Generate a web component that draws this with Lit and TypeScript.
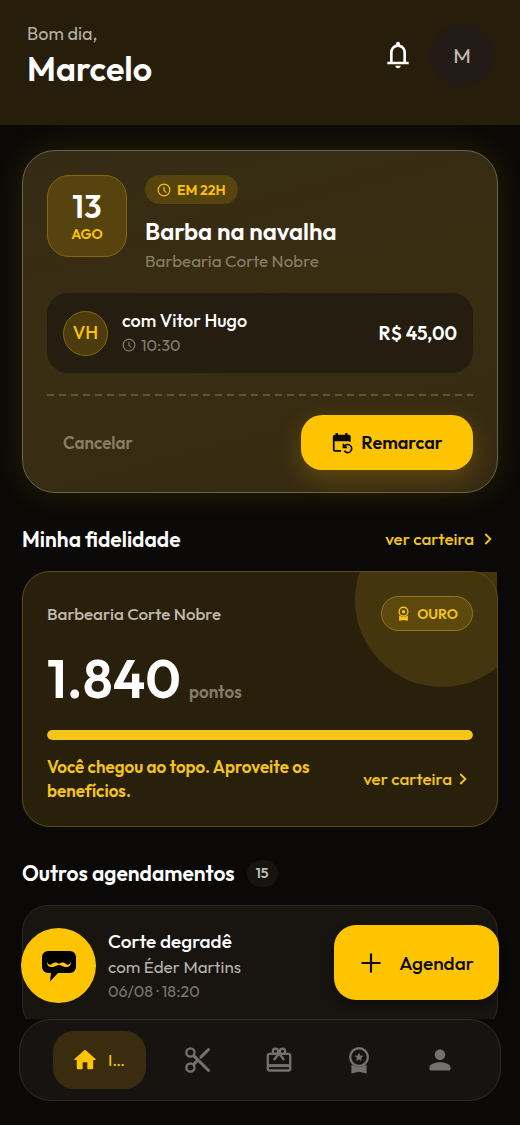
import { LitElement, html, css, svg } from "lit";
import { customElement, property } from "lit/decorators.js";

const ICONS: Record<string, unknown> = {
  bell: svg`<path fill="currentColor" d="M4 19v-2h2v-7q0-2.075 1.25-3.687T10.5 4.2v-.7q0-.625.438-1.062T12 2t1.063.438T13.5 3.5v.7q2 .5 3.25 2.113T18 10v7h2v2zm8 3q-.825 0-1.412-.587T10 20h4q0 .825-.587 1.413T12 22m-4-5h8v-7q0-1.65-1.175-2.825T12 6 9.175 7.175 8 10z"/>`,
  clock: svg`<g fill="none" stroke="currentColor" stroke-width="2"><circle cx="12" cy="12" r="10"/><path d="M12 6.500v6l4 4"/></g>`,
  reschedule: svg`<path fill="currentColor" d="M4 21.500q-2 0-2-2V5q0-2 2-2h1V1h2.500v2h8V1H18v2h1.500q2 0 2 2v5.500H19.700V10H4v9.700h7v1.800z"/><path fill="none" stroke="currentColor" stroke-width="1.800" d="M14.500 20.500a4.400 4.400 0 1 0-.3-4.300M13.600 12.800v4h4"/>`,
  chevron: svg`<path fill="none" stroke="currentColor" stroke-width="2.800" d="M8 4.500 15.500 12 8 19.500"/>`,
  medal: svg`<circle cx="12" cy="9" r="7" fill="none" stroke="currentColor" stroke-width="2.200"/><circle cx="12" cy="9" r="2.800" fill="currentColor"/><path fill="currentColor" d="M5 15q3 2.200 7 2.200t7-2.200v8.500l-7-1.200-7 1.200z"/>`,
  medalStar: svg`<circle cx="12" cy="9.500" r="7.600" fill="none" stroke="currentColor" stroke-width="2"/><path fill="currentColor" d="m12 5.700 1.100 2.500 2.700.25-2.050 1.800.6 2.650L12 11.500l-2.350 1.400.6-2.650L8.200 8.450l2.700-.25zM5.500 16Q8.600 17.800 12 17.800t6.500-1.800v7.500L12 22l-6.500 1.500z"/>`,
  home: svg`<path fill="currentColor" d="M10 19v-5h4v5c0 .55.45 1 1 1h3c.55 0 1-.45 1-1v-7h1.700c.46 0 .68-.57.33-.87L12.670 3.600c-.38-.34-.96-.34-1.340 0l-8.360 7.530c-.34.3-.13.87.33.87H5v7c0 .55.45 1 1 1h3c.55 0 1-.45 1-1z"/>`,
  scissors: svg`<g fill="none" stroke="currentColor" stroke-width="2" stroke-linecap="round"><circle cx="5.500" cy="5.500" r="3.500"/><circle cx="5.500" cy="18.500" r="3.500"/><path stroke-width="2.600" d="m8.500 8.500 12.500 12.500M8.500 15.500l2.500-2.500M14.500 9.500 21 3"/></g>`,
  gift: svg`<g fill="none" stroke="currentColor" stroke-width="2" stroke-linejoin="round"><rect x="2.400" y="6.800" width="19.200" height="14.200" rx="1.500"/><path stroke-width="2.600" d="M2.400 16.800h19.200"/><circle cx="9" cy="4.600" r="2.300"/><circle cx="15" cy="4.600" r="2.300"/><path d="m7.600 12 4.400-5.600 4.400 5.600"/></g>`,
  person: svg`<path fill="currentColor" d="M12 12c2.600 0 4.500-2 4.500-4.500S14.600 3 12 3 7.500 5 7.500 7.500 9.400 12 12 12zm0 2c-3.600 0-9 1.340-9 4.500V20c0 .55.45 1 1 1h16c.55 0 1-.45 1-1v-1.500c0-3.160-5.400-4.500-9-4.500z"/>`,
  plus: svg`<path fill="none" stroke="currentColor" stroke-width="2.200" d="M12 2.500v19M2.500 12h19"/>`,
  moustache: svg`<path fill="#000" d="M6 1h22a6 6 0 0 1 6 6v10a6 6 0 0 1-6 6H16l-8 8.500L9 23H6a6 6 0 0 1-6-6V7a6 6 0 0 1 6-6z"/><path fill="#ffc400" d="M17 14c-2-2-5-2-7 0-1.500 1.500-4 .8-5-2.200 0 4.700 3 5.700 6 5.200 2.500-.5 4-2 6-2s3.500 1.500 6 2c3 .5 6-.5 6-5.200-1 3-3.500 3.700-5 2.200-2-2-5-2-7 0z"/>`,
};

@customElement("ui-icon")
class UiIcon extends LitElement {
  @property() name = "";
  @property() box = "0 0 24 24";
  static styles = css`
    :host { display: block; flex: none; width: 24px; height: 24px; }
    svg { display: block; width: 100%; height: 100%; }
  `;
  render() {
    return html`<svg viewBox=${this.box} aria-hidden="true">${ICONS[this.name]}</svg>`;
  }
}

@customElement("app-root")
class AppRoot extends LitElement {
  static styles = css`
    :host {
      display: flex; flex-direction: column; height: 100vh; overflow: hidden;
      background: #0a0907; color: #fff;
      font-family: Outfit, Lato, sans-serif; font-size: 18px; line-height: 24px; font-weight: 500;
    }
    * { box-sizing: border-box; }
    button { font: inherit; color: inherit; border: 0; background: none; padding: 0; cursor: pointer; }
    a { color: inherit; text-decoration: none; }
    h1, h2, h3, p { margin: 0; font-weight: inherit; }

    .top { flex: none; display: flex; align-items: center; justify-content: space-between; height: 125px; padding: 0 26px 12px 27px; background: #261e0a; position: relative; z-index: 1; }
    .hello { font-weight: 400; color: #b5b0a5; }
    .name { font-size: 34px; line-height: 46px; font-weight: 600; }
    .actions { display: flex; align-items: center; gap: 16px; padding-bottom: 3px; }
    .bell ui-icon { width: 32px; height: 32px; }
    .me { width: 64px; height: 64px; border-radius: 50%; background: #231b15; color: #c0bbb5; font-size: 21px; font-weight: 400; }

    .stage { flex: 1; min-height: 0; position: relative; }
    .scroll { height: 100%; overflow: auto; scrollbar-width: none; padding: 25px 22px; }

    .next { border: 1px solid #6b644d; border-radius: 33px; padding: 24px 24px 22px; background: linear-gradient(165deg, #352b15, #392d12 45%, #362a12); box-shadow: 0 0 36px rgba(255, 196, 0, 0.13); }
    .head { display: flex; gap: 18px; }
    .date { flex: none; width: 80px; height: 82px; border: 1px solid #86690a; border-radius: 22px; background: #57430e; display: flex; flex-direction: column; align-items: center; justify-content: center; }
    .day { font-size: 32px; line-height: 36px; font-weight: 600; }
    .month { font-size: 14px; line-height: 20px; font-weight: 600; color: #ffc400; }
    .info { min-width: 0; display: flex; flex-direction: column; align-items: flex-start; }
    .soon { display: flex; align-items: center; gap: 6px; height: 29px; padding: 0 12px; border-radius: 15px; background: #57430e; color: #ffc400; font-size: 14px; font-weight: 600; }
    .soon ui-icon { width: 14px; height: 14px; }
    .service { margin-top: 11px; font-size: 24px; line-height: 32px; font-weight: 600; }
    .shop { margin-top: 2px; font-size: 17px; font-weight: 400; color: #887f69; }
    .pro { display: flex; align-items: center; gap: 14px; margin-top: 20px; padding: 16px; min-height: 80px; border-radius: 21px; background: #251d0f; }
    .initials { flex: none; width: 45px; height: 45px; border: 1px solid #86690a; border-radius: 50%; background: #4c3b0d; color: #ffc400; display: grid; place-items: center; }
    .who { flex: 1; }
    .hour { display: flex; align-items: center; gap: 5px; font-size: 16px; font-weight: 400; color: #837c70; }
    .hour ui-icon { width: 14px; height: 14px; }
    .price { font-size: 19px; font-weight: 600; }
    .rule { height: 2px; margin: 21px 0 19px; background: repeating-linear-gradient(90deg, #5f553d 0 7px, transparent 7px 12px); }
    .choices { display: flex; align-items: center; justify-content: space-between; padding-left: 16px; }
    .cancel { color: #887d67; font-size: 17px; font-weight: 600; }
    .redo { display: flex; align-items: center; justify-content: center; gap: 8px; width: 172px; height: 55px; border-radius: 21px; background: #ffc400; color: #0a0a0a; font-weight: 600; box-shadow: 0 8px 24px rgba(255, 196, 0, 0.22); }
    .redo ui-icon { width: 22px; height: 22px; }

    .title { display: flex; align-items: center; height: 24px; margin-top: 34px; margin-bottom: 20px; }
    .title h2 { font-size: 21px; line-height: 24px; font-weight: 600; }
    .more { display: flex; align-items: center; gap: 3px; margin-left: auto; color: #f5c518; font-size: 17px; font-weight: 500; white-space: nowrap; }
    .more ui-icon { width: 16px; height: 16px; }
    .title .more { gap: 6px; padding-right: 2px; }
    .count { margin-left: 12px; padding: 0 9px; border-radius: 14px; background: #171410; color: #c0bdb8; font-size: 14px; font-weight: 600; line-height: 27px; }

    .loyalty { position: relative; border-radius: 28px; padding: 25px 25px 24px; background: #29200c; }
    .loyalty::after { content: ""; position: absolute; inset: 0; border: 1px solid #5c4a11; border-radius: 28px; pointer-events: none; }
    .clip { position: absolute; inset: 1px; overflow: hidden; }
    .halo { position: absolute; top: -59px; right: -32px; width: 174px; height: 174px; border-radius: 50%; background: #43350d; }
    .row { position: relative; display: flex; align-items: center; justify-content: space-between; }
    .club { color: #c0b9ac; font-size: 17px; }
    .tier { display: flex; align-items: center; gap: 6px; height: 35px; padding: 0 14px; border: 1px solid #947816; border-radius: 18px; background: #5d490d; color: #f5c518; font-size: 14px; font-weight: 600; }
    .tier ui-icon { width: 15px; height: 15px; }
    .points { display: flex; align-items: baseline; gap: 8px; margin-top: 17px; }
    .total { font-size: 54px; line-height: 60px; font-weight: 600; }
    .unit { color: #857c68; font-size: 17px; font-weight: 600; }
    progress { display: block; appearance: none; width: 100%; height: 10px; margin-top: 22px; border: 0; border-radius: 5px; overflow: hidden; }
    progress::-webkit-progress-bar { background: #43350d; }
    progress::-webkit-progress-value { background: #f5c518; border-radius: 5px; }
    .foot { display: flex; align-items: center; justify-content: space-between; margin-top: 15px; padding-right: 2px; color: #f5c518; }
    .foot p { width: 290px; font-size: 17px; font-weight: 600; }

    .booking { min-height: 126px; border: 1px solid #2c2924; border-radius: 26px; padding: 22px 24px 23px 85px; background: #181410; }
    .booking h3 { font-size: 19px; line-height: 26px; }
    .booking p { font-size: 17px; font-weight: 400; color: #b5b2ad; line-height: 26px; }
    .booking .when { font-size: 16px; line-height: 22px; color: #797571; }

    .float { position: absolute; left: 21px; right: 21px; bottom: 16px; display: flex; align-items: flex-end; justify-content: space-between; pointer-events: none; }
    .float button { pointer-events: auto; background: #ffc400; color: #0a0a0a; height: 75px; }
    .float .chat { width: 75px; border-radius: 50%; display: grid; place-items: center; }
    .chat ui-icon { width: 34px; height: 32px; }
    .float .book { display: flex; align-items: center; justify-content: center; gap: 16px; width: 165px; margin-bottom: 3px; border-radius: 22px; font-size: 19px; box-shadow: 0 6px 10px rgba(0, 0, 0, 0.35); }

    .nav { flex: none; display: flex; align-items: center; margin: 0 19px 24px; height: 82px; padding: 0 20px 0 33px; border: 1px solid #302d29; border-radius: 32px; background: #171310; color: #73706d; }
    .nav a { flex: 1; display: flex; justify-content: center; }
    .nav ui-icon { width: 28px; height: 28px; }
    .nav .on { flex: none; align-items: center; gap: 9px; width: 93px; height: 58px; margin-right: 12px; padding-right: 3px; border-radius: 21px; background: #3a2c0e; color: #ffc400; font-size: 17px; font-weight: 400; }
  `;

  render() {
    return html`
      <header class="top">
        <div>
          <p class="hello">Bom dia,</p>
          <h1 class="name">Marcelo</h1>
        </div>
        <div class="actions">
          <button class="bell" aria-label="Notificações"><ui-icon name="bell"></ui-icon></button>
          <button class="me" aria-label="Perfil de Marcelo">M</button>
        </div>
      </header>

      <div class="stage">
        <main class="scroll">
          <section class="next">
            <div class="head">
              <div class="date"><span class="day">13</span><span class="month">AGO</span></div>
              <div class="info">
                <span class="soon"><ui-icon name="clock"></ui-icon>EM 22H</span>
                <h2 class="service">Barba na navalha</h2>
                <p class="shop">Barbearia Corte Nobre</p>
              </div>
            </div>
            <div class="pro">
              <span class="initials">VH</span>
              <div class="who">
                <div>com Vitor Hugo</div>
                <div class="hour"><ui-icon name="clock"></ui-icon>10:30</div>
              </div>
              <span class="price">R$ 45,00</span>
            </div>
            <div class="rule"></div>
            <div class="choices">
              <button class="cancel">Cancelar</button>
              <button class="redo"><ui-icon name="reschedule"></ui-icon>Remarcar</button>
            </div>
          </section>

          <div class="title">
            <h2>Minha fidelidade</h2>
            <a class="more" href="#carteira">ver carteira <ui-icon name="chevron"></ui-icon></a>
          </div>
          <section class="loyalty">
            <div class="clip"><div class="halo"></div></div>
            <div class="row">
              <span class="club">Barbearia Corte Nobre</span>
              <span class="tier"><ui-icon name="medal"></ui-icon>OURO</span>
            </div>
            <div class="points"><span class="total">1.840</span><span class="unit">pontos</span></div>
            <progress max="1" value="1" aria-label="Progresso de pontos"></progress>
            <div class="foot">
              <p>Você chegou ao topo. Aproveite os benefícios.</p>
              <a class="more" href="#carteira">ver carteira <ui-icon name="chevron"></ui-icon></a>
            </div>
          </section>

          <div class="title">
            <h2>Outros agendamentos</h2>
            <span class="count">15</span>
          </div>
          <article class="booking">
            <h3>Corte degradê</h3>
            <p>com Éder Martins</p>
            <p class="when">06/08 · 18:20</p>
          </article>
        </main>
        <div class="float">
          <button class="chat" aria-label="Conversar"><ui-icon name="moustache" box="0 0 34 32"></ui-icon></button>
          <button class="book"><ui-icon name="plus"></ui-icon>Agendar</button>
        </div>
      </div>

      <nav class="nav">
        <a class="on" href="#inicio"><ui-icon name="home"></ui-icon>I…</a>
        <a href="#servicos" aria-label="Serviços"><ui-icon name="scissors"></ui-icon></a>
        <a href="#presentes" aria-label="Presentes"><ui-icon name="gift"></ui-icon></a>
        <a href="#fidelidade" aria-label="Fidelidade"><ui-icon name="medalStar"></ui-icon></a>
        <a href="#perfil" aria-label="Perfil"><ui-icon name="person"></ui-icon></a>
      </nav>
    `;
  }
}
